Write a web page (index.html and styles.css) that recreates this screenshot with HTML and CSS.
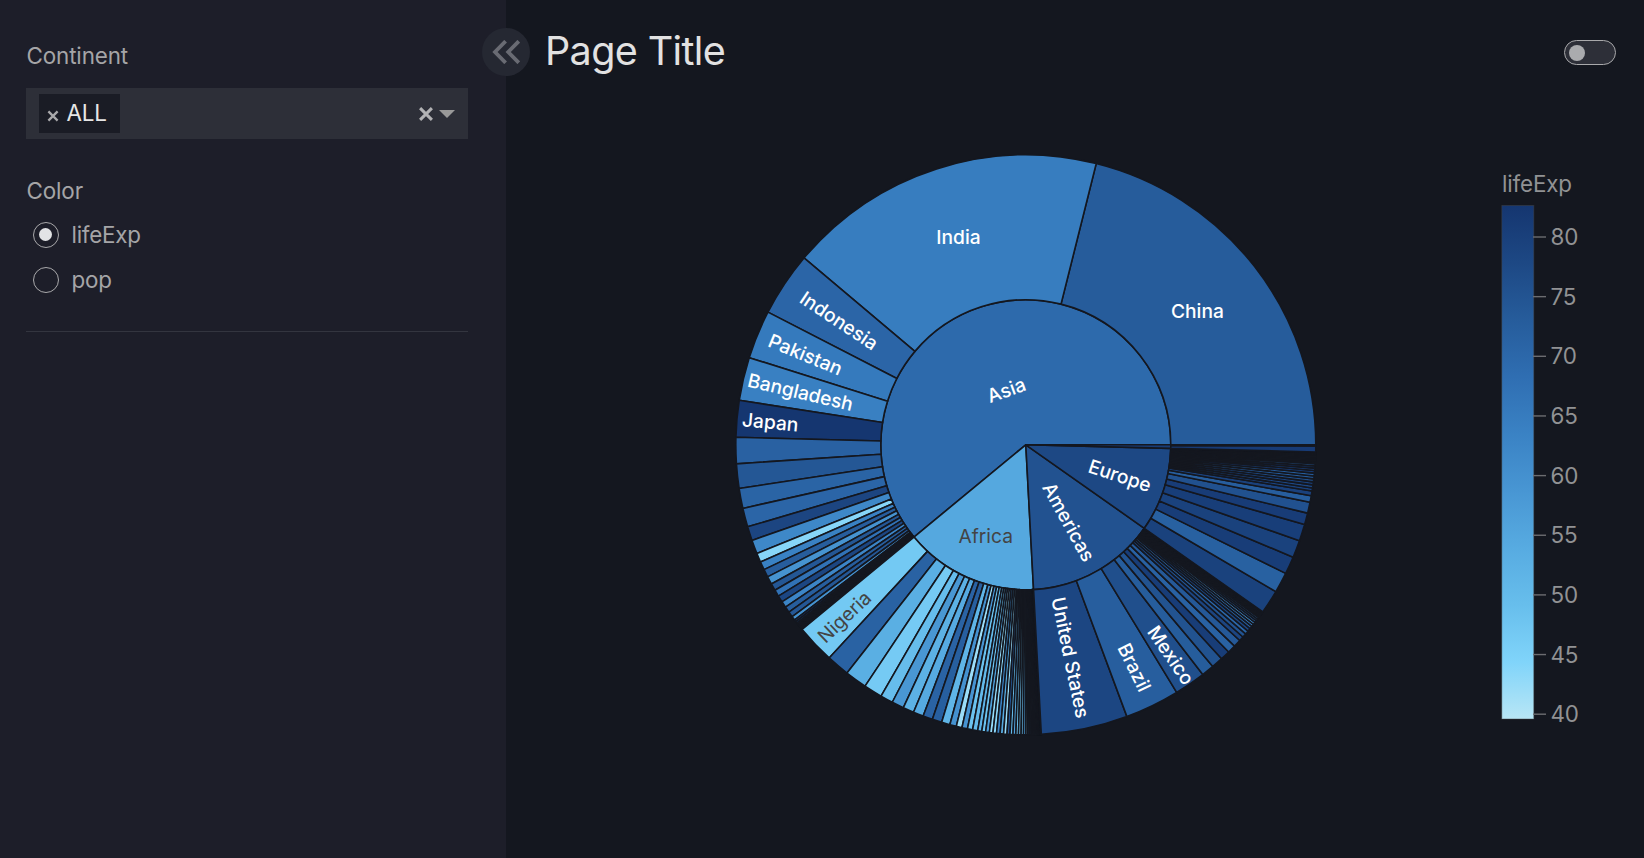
FILE: index.html
```html
<!DOCTYPE html>
<html lang="en">
<head>
<meta charset="utf-8">
<title>Page Title</title>
<link rel="stylesheet" href="styles.css">
</head>
<body>
<div class="app">
  <aside class="sidebar">
    <div class="label">Continent</div>
    <div class="select">
      <div class="tag">
        <svg class="tag-x" viewBox="0 0 12 12"><path d="M1.4 1.4 10.6 10.6M10.6 1.4 1.4 10.6"/></svg>
        <span>ALL</span>
      </div>
      <div class="select-actions">
        <svg class="clear" viewBox="0 0 14 14"><path d="M1.1 1.1 12.9 12.9M12.9 1.1 1.1 12.9"/></svg>
        <svg class="caret" viewBox="0 0 16 8"><path d="M0 0H16L8 8Z"/></svg>
      </div>
    </div>
    <div class="label label-color">Color</div>
    <div class="radio"><span class="dot on"></span>lifeExp</div>
    <div class="radio"><span class="dot"></span>pop</div>
    <hr class="rule">
    <button class="collapse" aria-label="Collapse">
      <svg viewBox="0 0 28 24"><path d="M13.6 1.2 3 12 13.6 22.8M26.8 1.2 16.2 12 26.8 22.8"/></svg>
    </button>
  </aside>
  <main class="main">
    <header class="header">
      <h1>Page Title</h1>
      <div class="toggle"><span></span></div>
    </header>
    <svg class="chart" id="chart" viewBox="506 104 1138 754"></svg>
  </main>
</div>
<script src="chart.js"></script>
</body>
</html>
```
FILE: styles.css
```css
* { box-sizing: border-box; }
body {
  margin: 0;
  font-family: Inter, "Liberation Sans", sans-serif;
  background: #14171f;
  color: #a5a5a7;
  overflow: hidden;
}
.app { display: flex; width: 1644px; height: 858px; }
.sidebar {
  position: relative;
  width: 506px;
  padding: 40px 38px 0 26px;
  background: #1d1e29;
  font-size: 22.4px;
  letter-spacing: -0.12px;
}
.label { height: 32px; line-height: 32px; padding-left: 0.5px; }
.select {
  display: flex;
  align-items: center;
  justify-content: space-between;
  height: 51px;
  margin-top: 16px;
  padding: 0 13px;
  background: #2d2f38;
}
.tag {
  display: flex;
  align-items: center;
  gap: 7.5px;
  width: 81px;
  height: 39px;
  padding-left: 8px;
  background: #1a1c25;
  color: #e6e6e6;
}
.tag span { margin-top: -2px; }
.tag-x { width: 12px; height: 12px; margin-top: 4px; fill: none; stroke: #a9a9ab; stroke-width: 2.3; }
.select-actions { display: flex; align-items: center; gap: 6px; }
.clear { width: 14px; height: 14px; fill: none; stroke: #b2b2b4; stroke-width: 3; }
.caret { width: 16px; height: 8px; fill: #999; }
.label-color { margin-top: 36px; }
.radio {
  display: flex;
  align-items: center;
  gap: 13px;
  height: 45px;
  padding-left: 6.5px;
  letter-spacing: -0.25px;
}
.label-color + .radio { margin-top: 5px; }
.dot {
  display: flex;
  width: 26px;
  height: 26px;
  border: 1px solid #a9a9ab;
  border-radius: 50%;
}
.dot.on::after {
  content: "";
  width: 13px;
  height: 13px;
  margin: auto;
  border-radius: 50%;
  background: #e2e3e5;
}
.rule { height: 1px; margin: 29px 0 0; border: 0; background: #33353f; }
.collapse {
  position: absolute;
  top: 28px;
  right: -24px;
  display: flex;
  align-items: center;
  justify-content: center;
  width: 48px;
  height: 48px;
  padding: 0;
  border: 0;
  border-radius: 50%;
  background: #252832;
}
.collapse svg { width: 28px; height: 24px; fill: none; stroke: #696b73; stroke-width: 3.8; }
.main { display: flex; flex-direction: column; width: 1138px; }
.header {
  display: flex;
  align-items: center;
  justify-content: space-between;
  height: 104px;
  padding: 0 28px 0 39px;
}
h1 { margin: -2px 0 0; font-size: 39.5px; font-weight: 400; line-height: 48px; letter-spacing: -0.62px; color: #e2e2e2; }
.toggle {
  width: 52px;
  height: 25px;
  padding: 4px;
  border: 1px solid #a9a9ab;
  border-radius: 13px;
  background: #2d2f38;
}
.toggle span { display: block; width: 16px; height: 16px; border-radius: 50%; background: #aaabae; }
.chart { width: 1138px; height: 754px; }
.slice { stroke: #14171f; stroke-width: 1.6; stroke-linejoin: round; }
.name { font-size: 19.2px; font-weight: 450; fill: #fff; text-anchor: middle; }
.name.dark { fill: #444; font-weight: 400; }
.axis { font-size: 22.4px; letter-spacing: -0.15px; fill: #919294; }
.tick { stroke: #6b6c70; stroke-width: 1.4; }
.bar { fill: url(#scale); stroke: #444; stroke-opacity: 0.45; stroke-width: 1; }
```
FILE: chart.js
```js
// Population and life expectancy, largest first within each continent.
const data = {
  Asia: [[1318683096,72.961,"China"],[1110396331,64.698,"India"],[223547000,70.65,"Indonesia"],[169270617,65.483,"Pakistan"],[150448339,64.062,"Bangladesh"],[127467972,82.603,"Japan"],[91077287,71.688],[85262356,74.249],[69453570,70.964],[65068149,70.616],[49044790,78.623],[47761980,62.069],[31889923,43.828],[28901790,63.785],[27601038,72.777],[27499638,59.545],[24821286,74.241],[23301725,67.297],[23174294,78.4],[22211743,62.698],[20378239,72.396],[19314747,74.143],[14131858,59.723],[6980412,82.208],[6426679,80.745],[6053193,72.535],[4553009,79.972],[4018332,73.422],[3921278,71.993],[3204897,75.64],[2874127,66.803],[2505559,77.588],[708573,75.635]],
  Africa: [[135031164,46.859,"Nigeria"],[80264543,71.338],[76511887,52.947],[64606759,46.462],[43997828,49.339],[42292929,58.556],[38139640,52.517],[35610177,54.11],[33757175,71.164],[33333216,72.301],[29170398,51.542],[22873338,60.022],[19951656,42.082],[19167654,59.443],[18013409,48.328],[17696293,50.43],[14326203,52.295],[13327079,48.303],[12894865,56.867],[12420476,42.731],[12311143,43.487],[12267493,63.062],[12031795,54.467],[11746035,42.384],[10276158,73.923],[10238807,50.651],[9947814,56.007],[9118773,48.159],[8860588,46.242],[8390505,49.58],[8078314,56.728],[6144562,42.568],[6036914,73.952],[5701579,58.42],[4906585,58.04],[4369038,44.741],[3800610,55.322],[3270065,64.164],[3193942,45.678],[2055080,52.906],[2012649,42.592],[1688359,59.448],[1639131,50.728],[1472041,46.388],[1454867,56.735],[1250882,72.801],[1133066,39.613],[798094,76.442],[710960,65.152],[551201,51.579],[496374,54.791],[199579,65.528]],
  Americas: [[301139947,78.242,"United States"],[190010647,72.39,"Brazil"],[108700891,76.195,"Mexico"],[44227550,72.889],[40301927,75.32],[33390141,80.653],[28674757,71.421],[26084662,73.747],[16284741,78.553],[13755680,74.994],[12572928,70.259],[11416987,78.273],[9319622,72.235],[9119152,65.554],[8502814,60.916],[7483763,70.198],[6939688,71.878],[6667147,71.752],[5675356,72.899],[4133884,78.782],[3942491,78.746],[3447496,76.384],[3242173,75.537],[2780132,72.567],[1056608,69.819]],
  Europe: [[82400996,79.406],[71158647,71.777],[61083916,80.657],[60776238,79.425],[58147733,80.546],[40448191,80.941],[38518241,75.563],[22276056,72.476],[16570613,79.762],[10706290,79.483],[10642836,78.098],[10392226,79.441],[10228744,76.486],[10150265,74.002],[9956108,73.338],[9031088,80.884],[8199783,79.829],[7554661,81.701],[7322858,73.005],[5468120,78.332],[5447502,74.663],[5238460,79.313],[4627926,80.196],[4552198,74.852],[4493312,75.748],[4109086,78.885],[3600523,76.423],[2009245,77.926],[684736,74.543],[301931,81.757]],
  Oceania: [[20434176,81.235],[4115771,80.204]]
};

// Colour scale from lowest to highest life expectancy.
const stops = [[39.613,[184,230,245]],[44.39,[128,212,250]],[49.17,[103,190,236]],[53.94,[87,171,225]],[58.72,[72,150,211]],[63.5,[58,130,196]],[68.27,[47,110,178]],[73.05,[38,92,155]],[77.83,[29,72,132]],[82.603,[21,54,112]]];
function color(v) {
  for (let i = 1; i < stops.length; i++) {
    if (v <= stops[i][0] || i === stops.length - 1) {
      const [a, ca] = stops[i - 1], [b, cb] = stops[i];
      const t = (v - a) / (b - a);
      return "rgb(" + ca.map((c, k) => Math.round(c + (cb[k] - c) * t)).join(",") + ")";
    }
  }
}

// Label centre and rotation.
const labels = [
  ["China",1197.4,311,0],["India",958.5,237.3,0],["Indonesia",839.1,320.6,33.7],["Pakistan",805.5,354.6,22.4],
  ["Bangladesh",800.5,392,13.2],["Japan",770.3,422,5.2],["Asia",1006.3,390,-19.8],["Africa",985.7,536,0,1],
  ["Nigeria",844.3,616.8,-43.4,1],["Europe",1119.9,475.5,18.3],["Americas",1068.8,521.9,61],
  ["United States",1070.6,657.6,78.3],["Brazil",1134.5,667.4,64.1],["Mexico",1171,655.2,55.5]
];

const CX = 1025.8, CY = 444.8, R1 = 145, R2 = 290;
const pt = (r, a) => (CX + r * Math.cos(a)).toFixed(3) + " " + (CY - r * Math.sin(a)).toFixed(3);
function sector(r0, r1, a0, a1, v) {
  const big = a1 - a0 > Math.PI ? 1 : 0;
  const inner = r0 ? `L${pt(r0, a1)}A${r0} ${r0} 0 ${big} 1 ${pt(r0, a0)}` : `L${CX} ${CY}`;
  return `<path class="slice" fill="${color(v)}" d="M${pt(r1, a0)}A${r1} ${r1} 0 ${big} 0 ${pt(r1, a1)}${inner}Z"/>`;
}

const sum = rows => rows.reduce((s, r) => s + r[0], 0);
const total = Object.values(data).reduce((s, rows) => s + sum(rows), 0);
let out = "", outer = "", angle = 0;
for (const rows of Object.values(data)) {
  const n = sum(rows);
  const mean = rows.reduce((s, r) => s + r[0] * r[1], 0) / n;
  out += sector(0, R1, angle, angle + n / total * 2 * Math.PI, mean);
  for (const [p, v] of rows) {
    const next = angle + p / total * 2 * Math.PI;
    outer += sector(R1, R2, angle, next, v);
    angle = next;
  }
}
out += outer;
for (const [t, x, y, r, dark] of labels)
  out += `<text class="name${dark ? " dark" : ""}" transform="translate(${x} ${y}) rotate(${r})" dy=".36em">${t}</text>`;

out += `<defs><linearGradient id="scale" x1="0" y1="1" x2="0" y2="0">` +
  stops.map(([v]) => `<stop offset="${(v - 39.613) / 42.99}" stop-color="${color(v)}"/>`).join("") +
  `</linearGradient></defs><rect class="bar" x="1501.8" y="205.5" width="32" height="513.5"/>`;
out += `<text class="axis" x="1502" y="191.5">lifeExp</text>`;
for (let v = 80; v >= 40; v -= 5) {
  const y = 237 + (80 - v) * 11.93;
  out += `<path class="tick" d="M1533 ${y}H1546"/><text class="axis" x="1550.5" y="${y + 8}">${v}</text>`;
}
document.getElementById("chart").innerHTML = out;
```
